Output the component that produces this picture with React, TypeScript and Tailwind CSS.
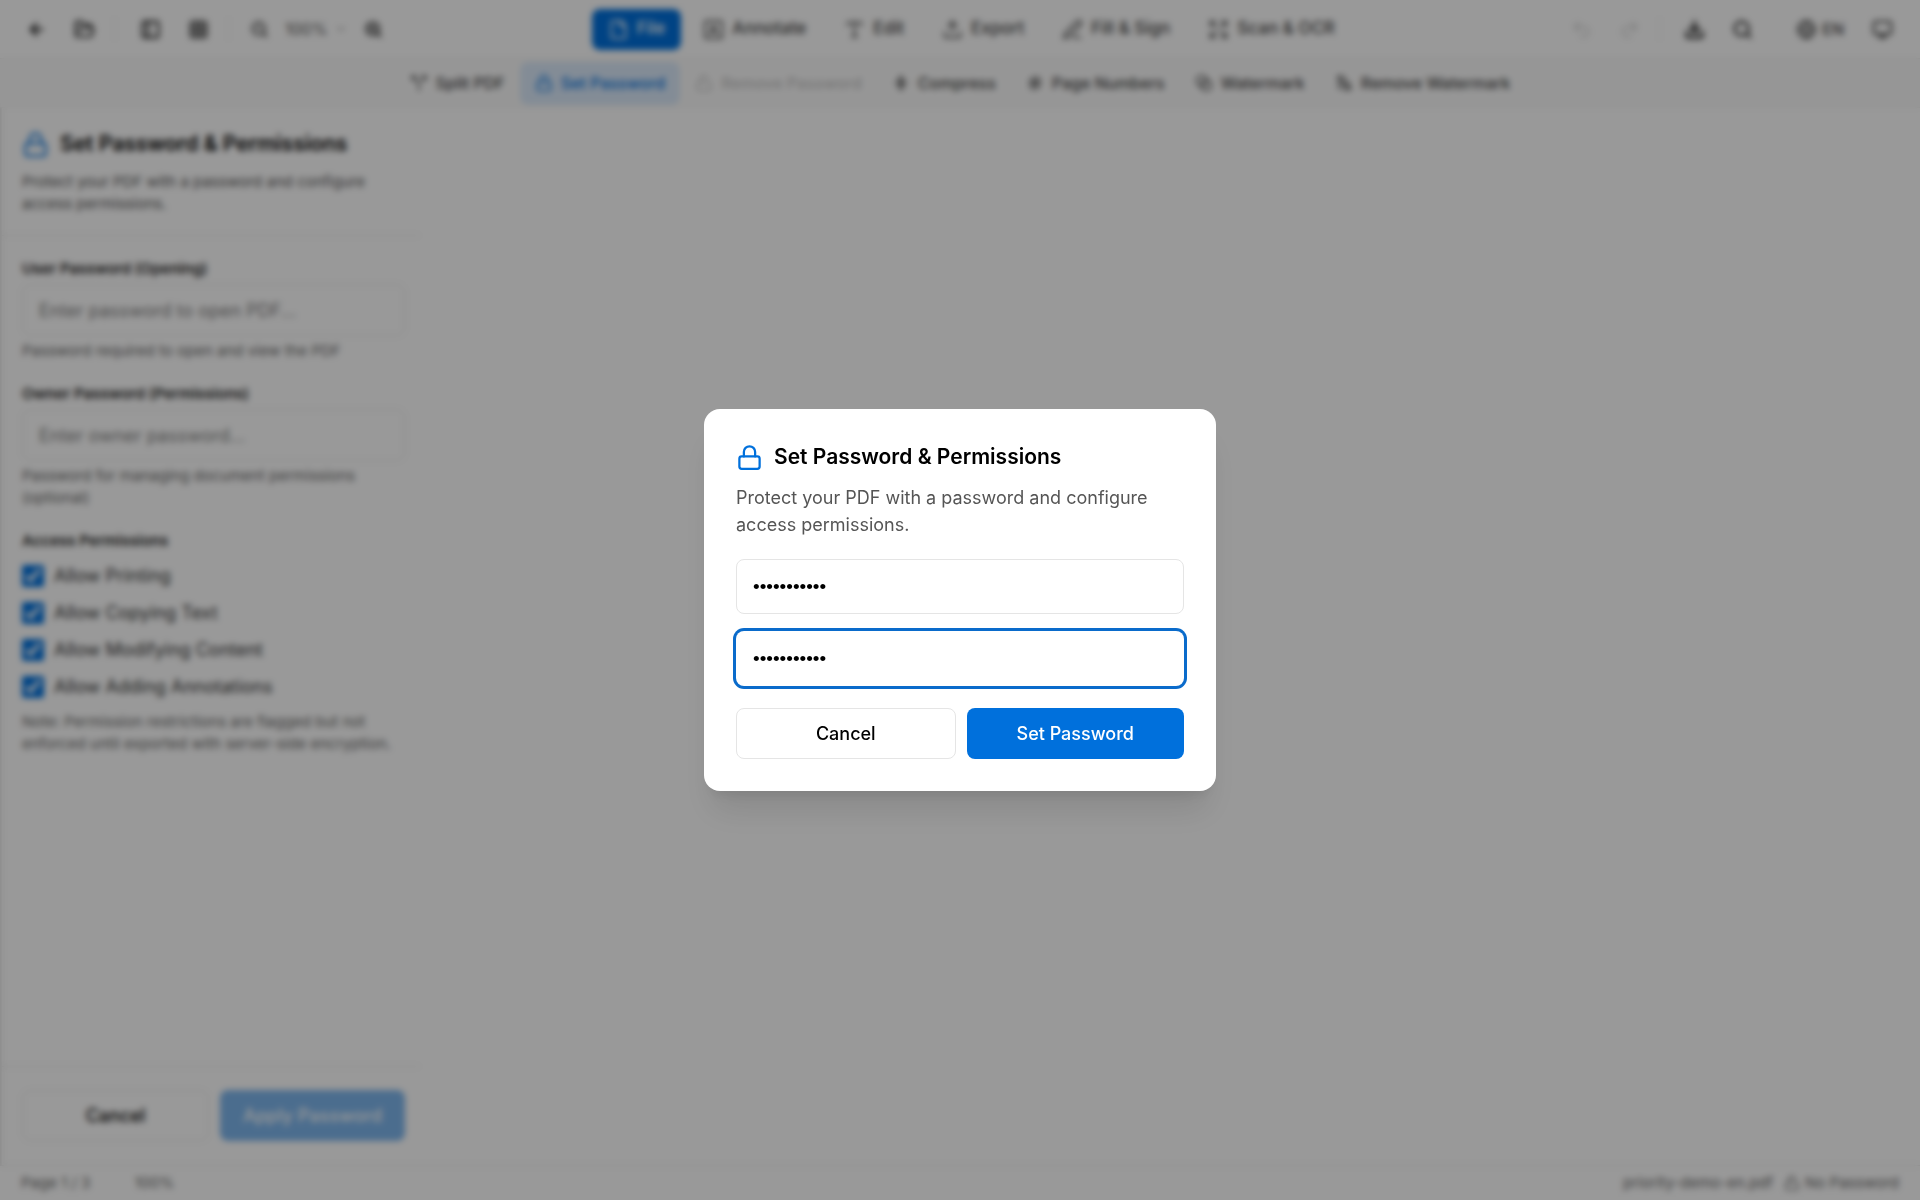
import { useState } from "react";
import type { ReactNode } from "react";
import {
  ArrowLeft,
  Blend,
  ChevronDown,
  Download,
  Expand,
  File,
  FolderOpen,
  Globe,
  Grid3x3,
  Hash,
  Lock,
  LockOpen,
  Monitor,
  PanelLeft,
  PenLine,
  Redo2,
  Search,
  Split,
  Type,
  Undo2,
  Upload,
  ZoomIn,
  ZoomOut,
} from "lucide-react";

function AnnotateIcon({ className }: { className?: string }) {
  return (
    <svg
      className={className}
      viewBox="0 0 24 24"
      fill="none"
      stroke="currentColor"
      strokeWidth={2}
      strokeLinecap="round"
      strokeLinejoin="round"
    >
      <rect x="2" y="2" width="20" height="20" rx="3" />
      <path d="M8 17l4-10 4 10M9.5 14h5" />
    </svg>
  );
}

function CompressIcon({ className }: { className?: string }) {
  return (
    <svg
      className={className}
      viewBox="0 0 24 24"
      fill="none"
      stroke="currentColor"
      strokeWidth={2}
      strokeLinecap="round"
      strokeLinejoin="round"
    >
      <path d="M12 2v20M4 12h16" />
      <path d="M8 6l4 4 4-4M8 18l4-4 4 4" />
    </svg>
  );
}

function WatermarkOffIcon({ className }: { className?: string }) {
  return (
    <svg
      className={className}
      viewBox="0 0 24 24"
      fill="none"
      stroke="currentColor"
      strokeWidth={2}
      strokeLinecap="round"
      strokeLinejoin="round"
    >
      <path d="M3 3l18 18" />
      <path d="M5 7v13M6 3h4l4 4" />
      <circle cx="15" cy="16" r="5" />
    </svg>
  );
}

const tabs = [
  { label: "File", icon: File, active: true },
  { label: "Annotate", icon: AnnotateIcon },
  { label: "Edit", icon: Type },
  { label: "Export", icon: Upload },
  { label: "Fill & Sign", icon: PenLine },
  { label: "Scan & OCR", icon: Expand },
];

const tools = [
  { label: "Split PDF", icon: Split },
  { label: "Set Password", icon: Lock, active: true },
  { label: "Remove Password", icon: LockOpen, disabled: true },
  { label: "Compress", icon: CompressIcon },
  { label: "Page Numbers", icon: Hash },
  { label: "Watermark", icon: Blend },
  { label: "Remove Watermark", icon: WatermarkOffIcon },
];

const permissions = [
  "Allow Printing",
  "Allow Copying Text",
  "Allow Modifying Content",
  "Allow Adding Annotations",
];

function IconButton({
  label,
  disabled,
  children,
}: {
  label: string;
  disabled?: boolean;
  children: ReactNode;
}) {
  return (
    <button
      type="button"
      aria-label={label}
      disabled={disabled}
      className="flex size-11 items-center justify-center rounded-lg text-[#222] disabled:opacity-20"
    >
      {children}
    </button>
  );
}

function Divider() {
  return <div className="mx-2 h-6 w-px bg-[#ececec]" />;
}

function Header() {
  return (
    <header className="flex h-[59px] items-center justify-between border-b border-[#eee] pr-4 pl-[14px]">
      <div className="flex items-center">
        <div className="flex gap-1">
          <IconButton label="Back">
            <ArrowLeft className="size-[19px]" strokeWidth={3} />
          </IconButton>
          <IconButton label="Open file">
            <FolderOpen className="size-[21px]" strokeWidth={2.5} />
          </IconButton>
        </div>
        <Divider />
        <div className="flex gap-1 pl-[5px]">
          <IconButton label="Toggle sidebar">
            <PanelLeft className="size-[21px]" strokeWidth={2.5} />
          </IconButton>
          <IconButton label="Thumbnails">
            <Grid3x3 className="size-[21px]" />
          </IconButton>
        </div>
        <Divider />
        <IconButton label="Zoom out">
          <ZoomOut className="size-[19px]" />
        </IconButton>
        <button type="button" className="flex items-center gap-2 px-1 text-base text-[#555]">
          100%
          <ChevronDown className="size-3" />
        </button>
        <IconButton label="Zoom in">
          <ZoomIn className="size-[19px]" strokeWidth={2.5} />
        </IconButton>
      </div>

      <nav className="flex items-center gap-[6px]">
        {tabs.map(({ label, icon: Icon, active }) => (
          <button
            key={label}
            type="button"
            className={
              active
                ? "flex h-[41px] items-center gap-2 rounded-lg bg-[#0070dc] px-4 text-[17px] font-medium text-white"
                : "flex h-[41px] items-center gap-2 rounded-lg px-4 text-[17px] font-medium text-[#444]"
            }
          >
            <Icon className="size-[21px]" />
            {label}
          </button>
        ))}
      </nav>

      <div className="flex items-center pl-3">
        <div className="flex gap-1">
          <IconButton label="Undo" disabled>
            <Undo2 className="size-[21px]" />
          </IconButton>
          <IconButton label="Redo" disabled>
            <Redo2 className="size-[21px]" />
          </IconButton>
        </div>
        <Divider />
        <div className="flex gap-1 pl-1">
          <IconButton label="Download">
            <Download className="size-[21px]" strokeWidth={3} />
          </IconButton>
          <IconButton label="Search">
            <Search className="size-[21px]" strokeWidth={2.5} />
          </IconButton>
        </div>
        <button
          type="button"
          className="ml-4 flex h-11 items-center gap-[5px] px-4 text-base font-medium text-[#444]"
        >
          <Globe className="size-[21px]" />
          EN
        </button>
        <IconButton label="Theme">
          <Monitor className="size-[21px]" />
        </IconButton>
      </div>
    </header>
  );
}

function Toolbar() {
  return (
    <div className="flex h-[49px] items-center justify-center border-b border-[#f2f2f2] bg-[#fbfbfb]">
      {tools.map(({ label, icon: Icon, active, disabled }) => (
        <button
          key={label}
          type="button"
          disabled={disabled}
          className={
            active
              ? "flex h-[43px] items-center gap-2 rounded-lg bg-[#dbeafb] px-[15px] text-base font-medium text-[#0070dc]"
              : "flex h-[43px] items-center gap-2 rounded-lg px-[15px] text-base font-medium text-[#444] disabled:opacity-30"
          }
        >
          <Icon className="size-[18px]" />
          {label}
        </button>
      ))}
    </div>
  );
}

function Sidebar() {
  return (
    <aside className="flex w-[420px] flex-col border-l-2 border-[#e8e8e8]">
      <div className="border-b border-[#e8e8e8] px-5 pt-5 pb-5">
        <h2 className="flex items-center gap-[11px] text-[21px] leading-8 font-semibold text-black">
          <Lock className="size-[27px] text-[#0070dc]" />
          Set Password &amp; Permissions
        </h2>
        <p className="mt-[11px] text-[15px] leading-[22px] text-[#555]">
          Protect your PDF with a password and configure access permissions.
        </p>
      </div>

      <div className="flex-1 pt-[22px] pr-[15px] pl-5">
        <label htmlFor="user-password" className="block text-[15px] leading-[22px] font-semibold text-[#222]">
          User Password (Opening)
        </label>
        <input
          id="user-password"
          type="password"
          placeholder="Enter password to open PDF..."
          className="mt-1 h-[52px] w-full rounded-lg border border-[#e5e5e5] px-4 text-lg placeholder:text-[#808080]"
        />
        <p className="mt-1 text-[15px] leading-[22px] text-[#666]">
          Password required to open and view the PDF
        </p>

        <label
          htmlFor="owner-password"
          className="mt-[21px] block text-[15px] leading-[22px] font-semibold text-[#222]"
        >
          Owner Password (Permissions)
        </label>
        <input
          id="owner-password"
          type="password"
          placeholder="Enter owner password..."
          className="mt-1 h-[52px] w-full rounded-lg border border-[#e5e5e5] px-4 text-lg placeholder:text-[#808080]"
        />
        <p className="mt-1 text-[15px] leading-[22px] text-[#666]">
          Password for managing document permissions (optional)
        </p>

        <h3 className="mt-[21px] text-[15px] leading-[22px] font-semibold text-[#222]">
          Access Permissions
        </h3>
        <div className="mt-[10px] flex flex-col gap-[10px]">
          {permissions.map((label) => (
            <label key={label} className="flex items-center gap-[10px] text-lg leading-[27px] text-[#333]">
              <input type="checkbox" defaultChecked className="size-[22px] accent-[#0070dc]" />
              {label}
            </label>
          ))}
        </div>
        <p className="mt-[11px] text-[15px] leading-[22px] text-[#666]">
          Note: Permission restrictions are flagged but not enforced until exported with server-side encryption.
        </p>
      </div>

      <div className="flex gap-[11px] border-t border-[#e8e8e8] pt-[23px] pr-[15px] pb-6 pl-5">
        <button
          type="button"
          className="h-[51px] flex-1 rounded-lg border border-[#e5e5e5] text-lg font-medium text-black"
        >
          Cancel
        </button>
        <button
          type="button"
          disabled
          className="h-[51px] flex-1 rounded-lg bg-[#0070dc] text-lg font-medium text-white disabled:opacity-50"
        >
          Apply Password
        </button>
      </div>
    </aside>
  );
}

function StatusBar() {
  return (
    <footer className="flex h-[35px] items-center justify-between border-t border-[#e8e8e8] px-[21px] text-[15px] text-[#666]">
      <div className="flex items-center gap-11">
        <span>Page 1 / 3</span>
        <span>100%</span>
      </div>
      <div className="flex items-center gap-[11px]">
        <span>priority-demo-en.pdf</span>
        <span className="flex items-center gap-[5px]">
          <LockOpen className="size-4" />
          No Password
        </span>
      </div>
    </footer>
  );
}

function PasswordDialog() {
  const [password, setPassword] = useState("secret-pass");
  const [confirm, setConfirm] = useState("secret-pass");

  return (
    <div className="fixed inset-0 flex items-center justify-center bg-black/40 p-4 backdrop-blur-[3px]">
      <div
        role="dialog"
        aria-modal="true"
        aria-labelledby="dialog-title"
        className="w-full max-w-[512px] rounded-2xl bg-white p-8 shadow-[0_27px_33px_-7px_rgba(0,0,0,0.1),0_11px_13px_-8px_rgba(0,0,0,0.1)]"
      >
        <h2 id="dialog-title" className="flex items-center gap-[11px] text-[21px] leading-8 font-semibold text-black">
          <Lock className="size-[27px] text-[#0070dc]" />
          Set Password &amp; Permissions
        </h2>
        <p className="mt-[11px] text-lg leading-[27px] text-[#555]">
          Protect your PDF with a password and configure access permissions.
        </p>
        <div className="mt-[21px] flex flex-col gap-[17px]">
          <input
            type="password"
            aria-label="Password"
            value={password}
            onChange={(e) => setPassword(e.target.value)}
            className="h-[55px] rounded-lg border border-[#e5e5e5] px-4 font-['Liberation_Sans',sans-serif] text-[19px] text-black outline-none"
          />
          <input
            type="password"
            aria-label="Confirm password"
            value={confirm}
            onChange={(e) => setConfirm(e.target.value)}
            className="h-[55px] rounded-lg border border-transparent px-4 font-['Liberation_Sans',sans-serif] text-[19px] text-black ring-3 ring-[#0a6bcb] outline-none"
          />
        </div>
        <div className="mt-[22px] flex gap-[11px]">
          <button
            type="button"
            className="h-[51px] flex-1 rounded-lg border border-[#e5e5e5] text-lg font-medium text-black"
          >
            Cancel
          </button>
          <button type="button" className="h-[51px] flex-1 rounded-lg bg-[#0070dc] text-lg font-medium text-white">
            Set Password
          </button>
        </div>
      </div>
    </div>
  );
}

export default function App() {
  return (
    <div className="flex min-h-screen flex-col bg-white font-['Inter',sans-serif]">
      <Header />
      <Toolbar />
      <main className="flex flex-1">
        <Sidebar />
      </main>
      <StatusBar />
      <PasswordDialog />
    </div>
  );
}
